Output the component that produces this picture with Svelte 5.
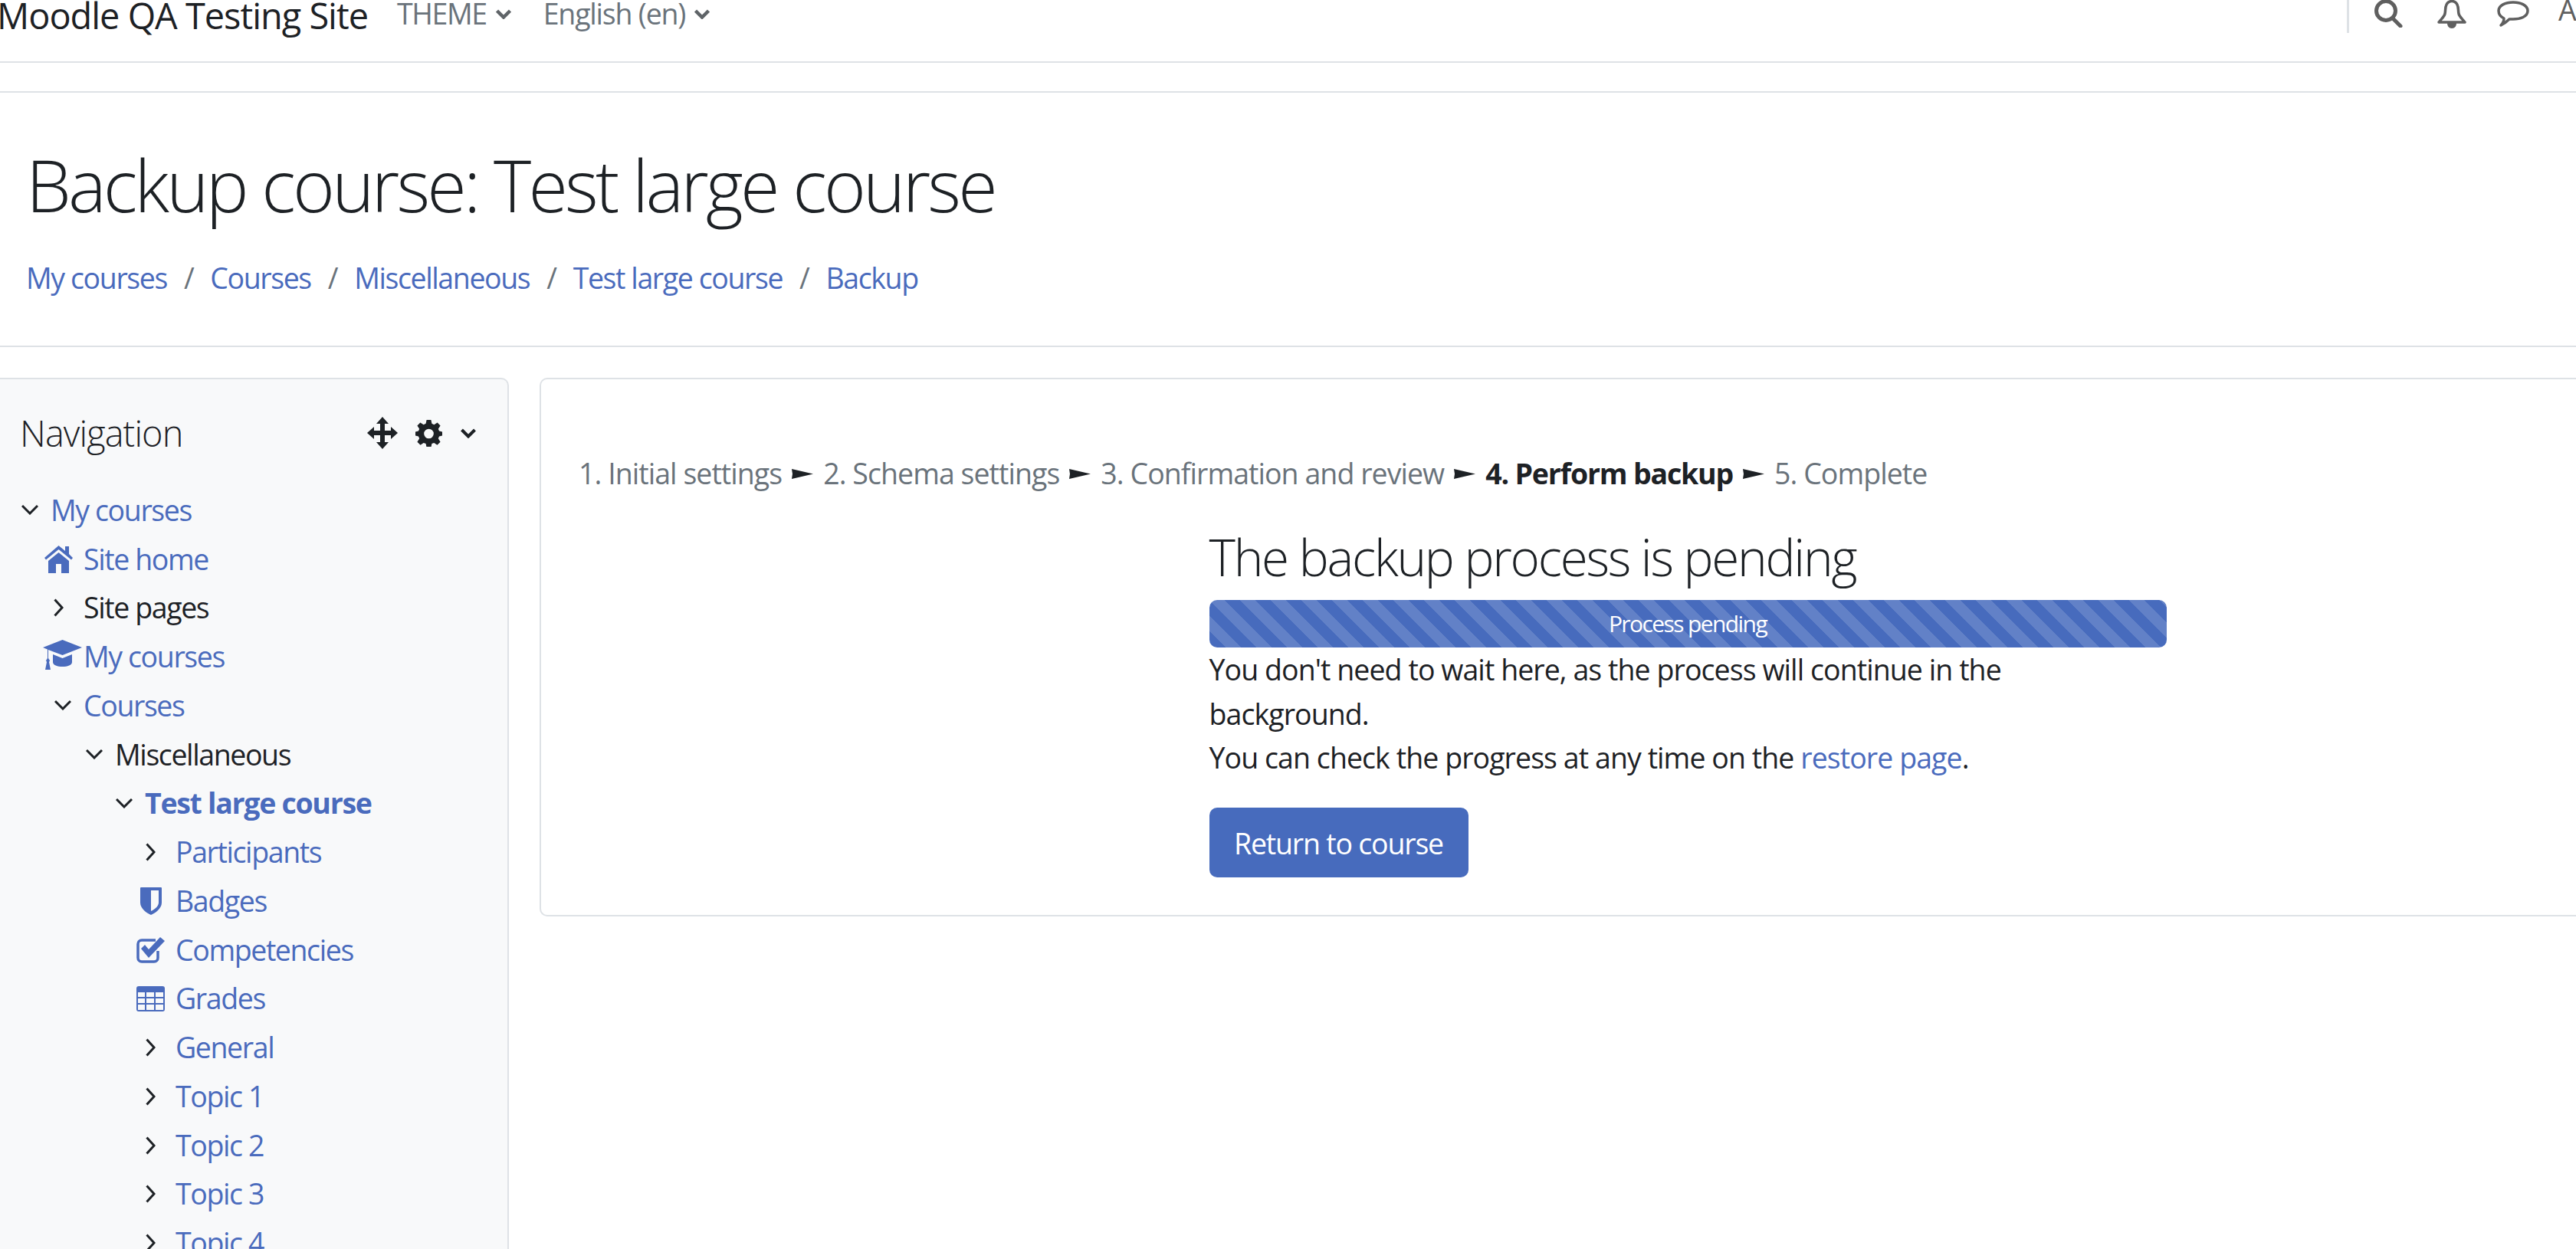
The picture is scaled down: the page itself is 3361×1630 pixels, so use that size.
<script>
	const breadcrumbs = ['My courses', 'Courses', 'Miscellaneous', 'Test large course', 'Backup']

	const steps = [
		{ label: '1. Initial settings' },
		{ label: '2. Schema settings' },
		{ label: '3. Confirmation and review' },
		{ label: '4. Perform backup', current: true },
		{ label: '5. Complete' }
	]

	const tree = [
		{ level: 0, icon: 'down', label: 'My courses', link: true },
		{ level: 1, icon: 'home', label: 'Site home', link: true },
		{ level: 1, icon: 'right', label: 'Site pages' },
		{ level: 1, icon: 'cap', label: 'My courses', link: true },
		{ level: 1, icon: 'down', label: 'Courses', link: true },
		{ level: 2, icon: 'down', label: 'Miscellaneous' },
		{ level: 3, icon: 'down', label: 'Test large course', link: true, bold: true },
		{ level: 4, icon: 'right', label: 'Participants', link: true },
		{ level: 4, icon: 'badge', label: 'Badges', link: true },
		{ level: 4, icon: 'check', label: 'Competencies', link: true },
		{ level: 4, icon: 'grid', label: 'Grades', link: true },
		{ level: 4, icon: 'right', label: 'General', link: true },
		{ level: 4, icon: 'right', label: 'Topic 1', link: true },
		{ level: 4, icon: 'right', label: 'Topic 2', link: true },
		{ level: 4, icon: 'right', label: 'Topic 3', link: true },
		{ level: 4, icon: 'right', label: 'Topic 4', link: true }
	]
</script>

<div class="page">
	<header class="navbar">
		<span class="brand">Moodle QA Testing Site</span>
		<span class="menu theme">THEME
			<svg class="caret" viewBox="0 0 20 13"><path d="M1.500 2l8.500 8.500L18.500 2" /></svg>
		</span>
		<span class="menu lang">English (en)
			<svg class="caret" viewBox="0 0 20 13"><path d="M1.500 2l8.500 8.500L18.500 2" /></svg>
		</span>
		<div class="usernav">
			<svg class="search" viewBox="0 0 38 36"><circle cx="16" cy="14" r="12.5" /><path d="M25 24l10 10" /></svg>
			<svg class="bell" viewBox="0 0 38 37">
				<path class="line" d="M10 18c1-5 0-8 2-12 3-6 11-6 14 0 2 4 1 7 2 12 1 4 5 7 8 11H2c3-4 7-7 8-11z" />
				<path class="fill" d="M13 30h12c0 4-2 7-6 7s-6-3-6-7z" />
			</svg>
			<svg class="chat" viewBox="0 0 42 36">
				<path d="M21 2c10 0 19 4 19 11 0 8-10 11-19 11-2 0-3 0-5 0-3 3-7 6-11 8 2-2 4-5 4-9C5 21 2 17 2 13 2 6 11 2 21 2z" />
			</svg>
			<span class="user">A</span>
		</div>
	</header>

	<section class="page-head">
		<h1>Backup course: Test large course</h1>
		<nav class="crumbs">
			{#each breadcrumbs as crumb, i}
				{#if i > 0}<span class="sep">/</span>{/if}
				<span class="link">{crumb}</span>
			{/each}
		</nav>
	</section>

	<div class="columns">
		<aside class="block">
			<div class="block-head">
				<h5>Navigation</h5>
				<svg class="move" viewBox="0 0 40 42">
					<path d="M20 0l8 9h-5v9h8v-5l9 8-9 8v-5h-8v9h5l-8 9-8-9h5v-9H9v5l-9-8 9-8v5h8V9h-5z" />
				</svg>
				<svg class="gear" viewBox="0 0 36 36">
					<path fill-rule="evenodd" d="M15 0h6l1 5 3 1.300 4.500-2.800 4 4.200L30.700 12l1.200 3 4.100 1v5l-4.100 1-1.200 3 2.800 4.500-4.200 4.200-4.300-2.900-3 1.200-1 5h-6l-1-5-3-1.200-4.300 2.900-4.200-4.200L5.300 25l-1.200-3-4.100-1v-5l4.100-1 1.200-3-2.800-4.300 4-4.200L11 6.300 14 5zM18 12a6.500 6.500 0 1 0 0 13 6.500 6.500 0 0 0 0-13z" />
				</svg>
				<svg class="block-caret" viewBox="0 0 20 13"><path d="M1.500 2l8.500 8.500L18.500 2" /></svg>
			</div>
			<ul class="tree">
				{#each tree as item}
					<li class="row level{item.level}" class:link={item.link} class:bold={item.bold}>
						<span class="slot">
							{#if item.icon === 'down'}
								<svg class="chev-down" viewBox="0 0 22 13"><path d="M1 1l10 10L21 1" /></svg>
							{:else if item.icon === 'right'}
								<svg class="chev-right" viewBox="0 0 13 24"><path d="M1.500 1.500L11 12l-9.500 10.500" /></svg>
							{:else if item.icon === 'home'}
								<svg class="ic-home" viewBox="0 0 37 36">
									<path d="M18.500 0L27 7V1h5v10l5 5-2 2.500L18.500 5 2 18.500 0 16zM5 20L18.500 9 32 20v16H22V24h-7v12H5z" />
								</svg>
							{:else if item.icon === 'cap'}
								<svg class="ic-cap" viewBox="0 0 51 44">
									<path d="M25.500 0L51 10 25.500 20 7 13v11l2 3-1 2 2 10H3l2-10-1-2 2-3V12.500L0 10z" />
									<path d="M13 19l12.500 5L38 19v10c0 4-6 6-12.500 6S13 33 13 29z" />
								</svg>
							{:else if item.icon === 'badge'}
								<svg class="ic-badge" viewBox="0 0 28 36">
									<path fill-rule="evenodd" d="M1 0h26c1 0 1 1 1 1v19c0 8-9 14-14 16C9 34 0 28 0 20V1c0 0 0-1 1-1zM14 4v27c4-2 10-6 10-11V4z" />
								</svg>
							{:else if item.icon === 'check'}
								<svg class="ic-check" viewBox="0 0 37 34">
									<path class="box" d="M28 18v9c0 3-2 5-5 5H7c-3 0-5-2-5-5V9c0-3 2-5 5-5h18" />
									<path d="M6 15l5-5 5 6L31 0l6 5-21 22z" />
								</svg>
							{:else if item.icon === 'grid'}
								<svg class="ic-grid" viewBox="0 0 37 33">
									<path fill-rule="evenodd" d="M3 0h31c2 0 3 1 3 3v27c0 2-1 3-3 3H3c-2 0-3-1-3-3V3c0-2 1-3 3-3zM2 8v6h9V8zM13 8v6h10V8zM25 8v6h10V8zM2 16v6h9v-6zM13 16v6h10v-6zM25 16v6h10v-6zM2 24v7h9v-7zM13 24v7h10v-7zM25 24v7h10v-7z" />
								</svg>
							{/if}
						</span>
						<span class="label">{item.label}</span>
					</li>
				{/each}
			</ul>
		</aside>

		<main class="block content">
			<div class="steps">
				{#each steps as step, i}
					{#if i > 0}<svg class="arrow" viewBox="0 0 28 13"><path d="M0 0l28 6.500L0 13l1-6.500z" /></svg>{/if}
					<span class="step" class:current={step.current}>{step.label}</span>
				{/each}
			</div>

			<div class="progress-wrap">
				<h3>The backup process is pending</h3>
				<div class="bar">Process pending</div>
				<p>You don't need to wait here, as the process will continue in the background.<br />
					You can check the progress at any time on the <span class="link">restore page</span>.</p>
				<button class="btn">Return to course</button>
			</div>
		</main>
	</div>
</div>

<style>
:global(body) {
	margin: 0;
	background: #fff;
}

.page {
	width: 3361px;
	height: 1630px;
	overflow: hidden;
	font-family: "Open Sans", "Noto Sans", sans-serif;
	font-size: 37.5px;
	line-height: 1.5;
	color: #1d2125;
	letter-spacing: -1.4px;
}

.link {
	color: #4a6bbd;
}

/* top bar, scrolled so the text is cut near the edge */
.navbar {
	height: 80px;
	border-bottom: 2px solid #dee2e6;
	display: flex;
	align-items: flex-start;
}

.brand {
	font-size: 46.9px;
	line-height: 40px;
	margin-left: -4px;
	margin-right: 38px;
	letter-spacing: -1px;
}

.menu {
	display: flex;
	align-items: center;
	color: #6a737b;
	line-height: 36px;
	gap: 12px;
}

.theme {
	margin-right: 42px;
}

.lang {
	letter-spacing: -1.2px;
}

.caret {
	width: 20px;
	height: 13px;
	fill: none;
	stroke: #5f6468;
	stroke-width: 4.5;
}

.usernav {
	margin-left: auto;
	height: 43px;
	border-left: 3px solid #dee2e6;
	margin-right: 0;
	width: 296px;
	display: flex;
	align-items: flex-start;
	position: relative;
}

.usernav svg {
	position: absolute;
}

.search {
	left: 32px;
	top: 0;
	width: 38px;
	height: 36px;
	fill: none;
	stroke: #5f5f5f;
	stroke-width: 5;
	stroke-linecap: round;
}

.bell {
	left: 115px;
	top: 0;
	width: 38px;
	height: 37px;
}

.bell .line {
	fill: none;
	stroke: #5f5f5f;
	stroke-width: 3.5;
	stroke-linejoin: round;
}

.bell .fill {
	fill: #5f5f5f;
}

.chat {
	left: 193px;
	top: 1px;
	width: 42px;
	height: 36px;
	fill: none;
	stroke: #5f5f5f;
	stroke-width: 3.5;
	stroke-linejoin: round;
}

.user {
	position: absolute;
	left: 273px;
	top: -12px;
	color: #5f5f5f;
	line-height: 50px;
}

.page-head {
	margin-top: 37px;
	height: 330px;
	border-top: 2px solid #dee2e6;
	border-bottom: 2px solid #dee2e6;
	padding-left: 34px;
}

h1 {
	margin: 0;
	padding-top: 64px;
	font-size: 93.75px;
	font-weight: 300;
	line-height: 1.2;
	letter-spacing: -3.8px;
}

.crumbs {
	margin-top: 37px;
	margin-left: 0;
	display: flex;
	gap: 22px;
}

.sep {
	color: #6a737b;
}

.columns {
	margin-top: 40px;
	display: flex;
	gap: 40px;
	align-items: flex-start;
}

.block {
	border: 2.5px solid #dee2e6;
	border-radius: 10px;
}

aside.block {
	width: 664px;
	flex: none;
	border-left: 0;
	border-top-left-radius: 0;
	background: #f8f9fa;
	height: 1300px;
	box-sizing: border-box;
	padding-top: 40px;
}

.block-head {
	display: flex;
	align-items: center;
	height: 60px;
	padding-left: 26px;
	position: relative;
}

h5 {
	margin: 0;
	font-size: 46.9px;
	font-weight: 300;
	letter-spacing: -0.9px;
	flex: 1;
}

.move {
	width: 40px;
	height: 42px;
	fill: #1d2125;
	margin-right: 23px;
}

.gear {
	width: 35px;
	height: 35px;
	fill: #1d2125;
	margin-right: 24px;
}

.block-caret {
	width: 20px;
	height: 13px;
	fill: none;
	stroke: #1d2125;
	stroke-width: 4;
	margin-right: 41px;
}

.tree {
	list-style: none;
	margin: 39px 0 0;
	padding: 0;
}

.row {
	height: 63.75px;
	display: flex;
	align-items: center;
}

.level0 { padding-left: 24px; }
.level1 { padding-left: 67px; }
.level2 { padding-left: 108px; }
.level3 { padding-left: 147px; }
.level4 { padding-left: 187px; }

.slot {
	width: 42px;
	flex: none;
	display: flex;
	align-items: center;
}

.row.link {
	color: #4a6bbd;
}

.row.bold {
	font-weight: 700;
	letter-spacing: -1.3px;
}

.chev-down {
	width: 22px;
	height: 13px;
	margin-left: 4px;
	fill: none;
	stroke: #1d2125;
	stroke-width: 3;
}

.chev-right {
	width: 13px;
	height: 24px;
	margin-left: 3px;
	fill: none;
	stroke: #1d2125;
	stroke-width: 3;
}

.ic-home {
	width: 37px;
	height: 36px;
	margin-left: -9px;
	fill: #4a6bbd;
}

.ic-cap {
	width: 51px;
	height: 44px;
	margin-left: -11px;
	margin-right: -20px;
	flex: none;
	fill: #4a6bbd;
}

.ic-badge {
	width: 28px;
	height: 36px;
	margin-left: -4px;
	fill: #4a6bbd;
}

.ic-check {
	width: 37px;
	height: 34px;
	margin-left: -9px;
	fill: #4a6bbd;
}

.ic-check .box {
	fill: none;
	stroke: #4a6bbd;
	stroke-width: 3.5;
}

.ic-grid {
	width: 37px;
	height: 33px;
	margin-left: -9px;
	fill: #4a6bbd;
}

.content {
	flex: 1;
	border-right: 0;
	border-top-right-radius: 0;
	border-bottom-right-radius: 0;
	height: 703px;
	box-sizing: border-box;
	padding: 95px 0 0 49px;
}

.steps {
	color: #6a737b;
	display: flex;
	align-items: center;
	gap: 13px;
	letter-spacing: -0.95px;
}

.arrow {
	width: 28px;
	height: 13px;
	fill: #1d2125;
}

.step.current {
	color: #1d2125;
	font-weight: 700;
	letter-spacing: -1.2px;
}

.progress-wrap {
	margin-left: 822.5px;
	width: 1249px;
	margin-top: 42px;
}

h3 {
	margin: 0 0 16px;
	font-size: 65.6px;
	font-weight: 300;
	line-height: 1.2;
	letter-spacing: -2.25px;
}

.bar {
	height: 62.5px;
	border-radius: 10px;
	background-color: #476bbd;
	background-image: linear-gradient(45deg, rgba(255, 255, 255, 0.15) 25%, transparent 25%, transparent 50%, rgba(255, 255, 255, 0.15) 50%, rgba(255, 255, 255, 0.15) 75%, transparent 75%, transparent);
	background-size: 40px 40px;
	color: #fff;
	font-size: 30px;
	line-height: 62.5px;
	text-align: center;
	letter-spacing: -1.6px;
}

p {
	margin: 0 0 37px;
	width: 1080px;
	line-height: 57.25px;
	letter-spacing: -0.93px;
}

.btn {
	display: block;
	height: 91px;
	width: 338px;
	padding: 3px 0 0;
	border: 0;
	border-radius: 10px;
	background: #476bbd;
	color: #fff;
	font: inherit;
	letter-spacing: -1.2px;
}
</style>
